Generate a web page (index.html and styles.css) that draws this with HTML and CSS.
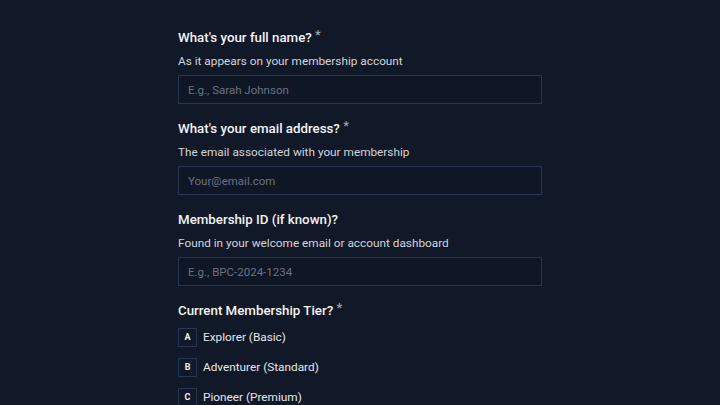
FILE: index.html
```html
<!DOCTYPE html>
<html>
<head>
<meta charset="utf-8">
<link rel="stylesheet" href="styles.css">
</head>
<body>
<main class="form">
  <section class="field">
    <h2 class="label">What's your full name? <span class="req">*</span></h2>
    <p class="desc">As it appears on your membership account</p>
    <div class="input">E.g., Sarah Johnson</div>
  </section>
  <section class="field">
    <h2 class="label">What's your email address? <span class="req">*</span></h2>
    <p class="desc">The email associated with your membership</p>
    <div class="input">Your@email.com</div>
  </section>
  <section class="field">
    <h2 class="label">Membership ID (if known)?</h2>
    <p class="desc">Found in your welcome email or account dashboard</p>
    <div class="input">E.g., BPC-2024-1234</div>
  </section>
  <section class="field">
    <h2 class="label">Current Membership Tier? <span class="req">*</span></h2>
    <ul class="options">
      <li class="option"><span class="key">A</span>Explorer (Basic)</li>
      <li class="option"><span class="key">B</span>Adventurer (Standard)</li>
      <li class="option"><span class="key">C</span>Pioneer (Premium)</li>
    </ul>
  </section>
</main>
</body>
</html>
```
FILE: styles.css
```css
html, body {
  margin: 0;
  padding: 0;
  background: #111827;
  color: #e5e7eb;
  font-family: Roboto, "Noto Sans", sans-serif;
}
.form {
  width: 364px;
  margin: 0 0 0 178px;
  padding-top: 28px;
  display: flex;
  flex-direction: column;
  gap: 15px;
}
.field {
  display: flex;
  flex-direction: column;
}
.label {
  margin: 0;
  font-size: 13.3px;
  font-weight: 500;
  line-height: 20px;
  color: #f3f4f6;
}
.req {
  font-size: 13px;
  line-height: 0;
  vertical-align: 3px;
  color: #9ca3af;
}
.desc {
  margin: 5px 0 0;
  font-size: 11.8px;
  line-height: 16px;
  color: #d1d5db;
}
.input {
  margin-top: 6px;
  height: 27px;
  border: 1px solid #283450;
  background: #0f1626;
  box-sizing: content-box;
  padding: 0 9px;
  display: flex;
  align-items: center;
  font-size: 11.5px;
  color: #6b7280;
}
.options {
  list-style: none;
  margin: 7px 0 0;
  padding: 0;
  display: flex;
  flex-direction: column;
  gap: 12px;
}
.option {
  display: flex;
  align-items: center;
  gap: 6px;
  font-size: 11.8px;
  color: #e5e7eb;
  height: 18px;
}
.key {
  width: 17px;
  height: 17px;
  border: 1px solid #283450;
  display: flex;
  align-items: center;
  justify-content: center;
  font-size: 9px;
  font-weight: 700;
  color: #f3f4f6;
}
```
